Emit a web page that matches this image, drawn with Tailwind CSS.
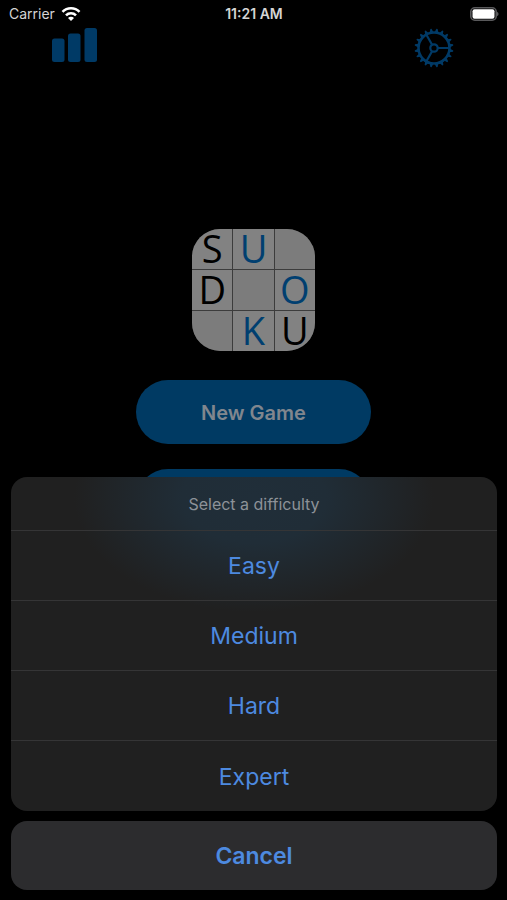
<!DOCTYPE html>
<html lang="en">
<head>
    <meta charset="UTF-8">
    <meta name="viewport" content="width=device-width, initial-scale=1.0">
    <title>Sudoku</title>
    <script src="https://cdn.jsdelivr.net/npm/@tailwindcss/browser@4"></script>
</head>
<body class="relative min-h-screen overflow-hidden bg-black font-['Inter',sans-serif]">

    <!-- Status Bar -->
    <div class="grid h-[27px] grid-cols-3 items-center pl-[9px] pr-2 text-sm text-[#d4d4d4]">
        <div class="flex items-center gap-1.5">
            <span>Carrier</span>
            <svg class="h-4 w-5" viewBox="0 0 20 16" fill="none" stroke="#fff" stroke-width="2.6">
                <path d="M1.5 5.8a12 12 0 0 1 17 0"/>
                <path d="M5 9.3a7 7 0 0 1 10 0"/>
                <path d="M10 15l-3-3a4.2 4.2 0 0 1 6 0z" fill="#fff" stroke="none"/>
            </svg>
        </div>
        <span class="text-center font-semibold">11:21 AM</span>
        <svg class="h-[14px] w-[29px] justify-self-end" viewBox="0 0 29 14">
            <rect x="0.8" y="0.8" width="25.4" height="12.4" rx="4" fill="none" stroke="#59595b" stroke-width="1.6"/>
            <rect x="2.5" y="2.3" width="22" height="9.4" rx="2" fill="#fff"/>
            <path d="M27 4.8q1.6.8 1.6 2.2t-1.6 2.2z" fill="#59595b"/>
        </svg>
    </div>

    <!-- Statistics and Settings -->
    <header class="flex h-10 items-start justify-between pl-[52px] pr-[53px]">
        <button class="pt-px" aria-label="Statistics">
            <svg class="h-[34px] w-[46px]" viewBox="0 0 46 34" fill="#003a66">
                <rect x="0" y="10.5" width="12.5" height="23.5" rx="2.5"/>
                <rect x="16" y="5.5" width="12.5" height="28.5" rx="2.5"/>
                <rect x="32.5" y="0" width="12.5" height="34" rx="2.5"/>
            </svg>
        </button>
        <button class="pt-px" aria-label="Settings">
            <svg id="gear" class="h-10 w-10" viewBox="-20 -20 40 40" fill="none" stroke="#003a66" stroke-width="2.2">
                <circle r="15.5" stroke-width="2.6"/>
                <circle r="3.7"/>
                <path d="M3.7 0H15M-1.9 -3.2L-7.6 -13.2M-1.9 3.2L-7.6 13.2"/>
            </svg>
        </button>
    </header>

    <main class="flex flex-col items-center pt-[162px]">
        <!-- Logo -->
        <div class="grid h-[122px] w-[123px] grid-cols-3 grid-rows-3 gap-px overflow-hidden rounded-[28px] bg-[#3c3c3c] text-center font-['Open_Sans',sans-serif] text-[38px] leading-[38px] text-black">
            <span class="bg-[#828282]">S</span>
            <span class="bg-[#828282] text-[#003f70]">U</span>
            <span class="bg-[#7c7c7c]"></span>
            <span class="bg-[#828282]">D</span>
            <span class="bg-[#7c7c7c]"></span>
            <span class="bg-[#828282] text-[#003f70]">O</span>
            <span class="bg-[#7c7c7c]"></span>
            <span class="bg-[#828282] text-[#003f70]">K</span>
            <span class="bg-[#828282]">U</span>
        </div>

        <!-- Menu Buttons -->
        <button class="mt-[29px] h-16 w-[235px] rounded-full bg-[#003a63] pt-0.5 text-xl font-semibold text-[#80868e]">New Game</button>
        <div class="mt-[25px] h-16 w-[235px] rounded-full bg-[#003a63]"></div>
    </main>

    <!-- Difficulty Sheet -->
    <div role="dialog" aria-labelledby="sheetTitle" class="absolute inset-x-0 bottom-0 pb-[10px] pl-[11px] pr-[10px] text-[23px] text-[#4d8ae0]">
        <div class="flex flex-col divide-y divide-[#353536] overflow-hidden rounded-2xl bg-[#202020] bg-[radial-gradient(180px_115px_at_50%_20px,#202e39,#202d37_40%,#202020)]">
            <h2 id="sheetTitle" class="flex h-[54px] items-center justify-center pt-px text-base text-[#8d9298]">Select a difficulty</h2>
            <button class="h-[70px] pt-0.5">Easy</button>
            <button class="h-[70px] pt-0.5">Medium</button>
            <button class="h-[70px] pt-0.5">Hard</button>
            <button class="h-[70px] pt-0.5">Expert</button>
        </div>
        <button class="mt-[10px] h-[69px] w-full rounded-2xl bg-[#2c2c2e] pt-0.5 font-semibold">Cancel</button>
    </div>

    <script>
        // Add the teeth around the settings gear
        const gear = document.getElementById("gear");
        for (let i = 0; i < 20; i++) {
            const tooth = document.createElementNS("http://www.w3.org/2000/svg", "path");
            tooth.setAttribute("d", "M16 -1.8L19.4 -0.6V0.6L16 1.8Z");
            tooth.setAttribute("fill", "#003a66");
            tooth.setAttribute("stroke", "none");
            tooth.setAttribute("transform", `rotate(${i * 18 + 9})`);
            gear.appendChild(tooth);
        }
    </script>

</body>
</html>
